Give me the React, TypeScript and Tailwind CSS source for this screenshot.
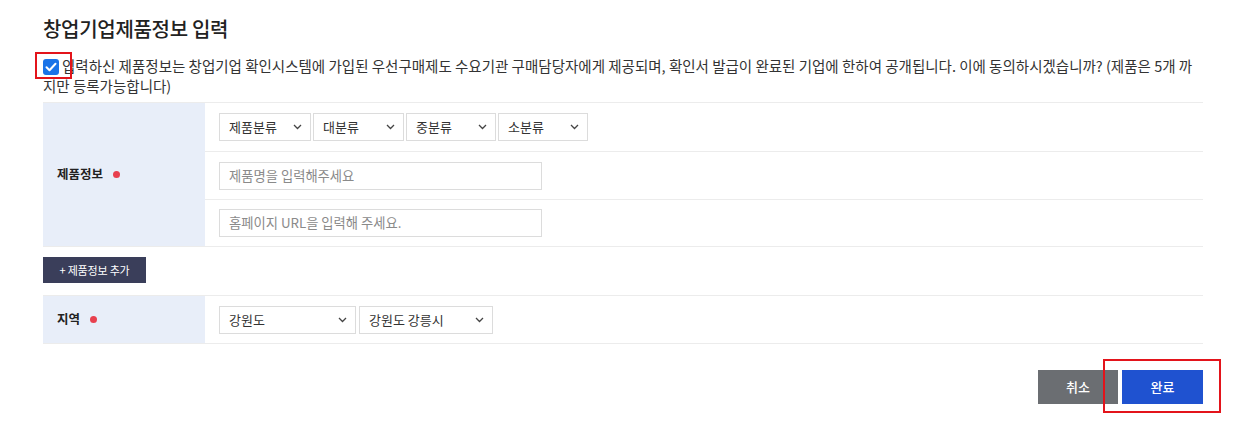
import React from "react";

const font = { fontFamily: '"Noto Sans CJK KR", "Noto Sans", sans-serif' };

function Chevron() {
  return (
    <svg width="9" height="6" viewBox="0 0 9 6" className="absolute right-[8px] top-1/2 -translate-y-1/2">
      <path d="M1 1l3.5 3.5L8 1" fill="none" stroke="#444" strokeWidth="1.3" />
    </svg>
  );
}

function Sel({ label, w }: { label: string; w: string }) {
  return (
    <div className={`relative h-[28px] ${w} border border-[#dcdcdc] bg-white flex items-center pl-[9px] text-[13px] text-[#333]`}>
      {label}
      <Chevron />
    </div>
  );
}

function Dot() {
  return <span className="inline-block w-[7px] h-[7px] rounded-full bg-[#e8404f] ml-[10px]" />;
}

export default function App() {
  return (
    <div className="w-[1248px] h-[429px] bg-white overflow-hidden relative" style={font}>
      <div className="pl-[43px] w-[1203px]">
        <h1 className="pt-[15px] text-[20px] leading-[28px] font-medium text-[#222] tracking-[-0.3px]">창업기업제품정보 입력</h1>
        <div className="mt-[13px] text-[14.5px] leading-[20px] text-[#333] whitespace-nowrap relative">
          <span className="relative inline-block align-[-3px] w-[16px] h-[16px] rounded-[3px] bg-[#1a73e8] mr-[3px]">
            <svg width="16" height="16" viewBox="0 0 16 16" className="absolute inset-0">
              <path d="M3.5 8.2l3 3 6-6.5" fill="none" stroke="white" strokeWidth="2" strokeLinecap="round" strokeLinejoin="round" />
            </svg>
            <span className="absolute left-[-8px] top-[-7px] w-[37px] h-[27px] border-2 border-[#e3141b]" />
          </span>
          입력하신 제품정보는 창업기업 확인시스템에 가입된 우선구매제도 수요기관 구매담당자에게 제공되며, 확인서 발급이 완료된 기업에 한하여 공개됩니다. 이에 동의하시겠습니까? (제품은 5개 까
          <br />
          지만 등록가능합니다)
        </div>

        <div className="mt-[6px] flex border-t border-[#ececec] border-b">
          <div className="w-[162px] bg-[#e8eef9] flex items-center pl-[14px] text-[12.5px] font-bold text-[#222]">
            제품정보<Dot />
          </div>
          <div className="flex-1">
            <div className="h-[49px] border-b border-[#ececec] flex items-center pl-[14px] gap-[2px]">
              <Sel label="제품분류" w="w-[92px]" />
              <Sel label="대분류" w="w-[91px]" />
              <Sel label="중분류" w="w-[90px]" />
              <Sel label="소분류" w="w-[90px]" />
            </div>
            <div className="h-[48px] border-b border-[#ececec] flex items-center pl-[14px]">
              <div className="w-[323px] h-[28px] border border-[#dcdcdc] flex items-center pl-[9px] text-[13.3px] text-[#8a8a8a]">제품명을 입력해주세요</div>
            </div>
            <div className="h-[46px] flex items-center pl-[14px]">
              <div className="w-[323px] h-[28px] border border-[#dcdcdc] flex items-center pl-[9px] text-[13.3px] text-[#8a8a8a]">홈페이지 URL을 입력해 주세요.</div>
            </div>
          </div>
        </div>

        <div className="mt-[10px] w-[103px] h-[26px] bg-[#3a3e5a] text-white text-[11px] flex items-center justify-center tracking-[-0.2px]">+ 제품정보 추가</div>

        <div className="mt-[12px] flex h-[49px] border-t border-b border-[#ececec]">
          <div className="w-[162px] bg-[#e8eef9] flex items-center pl-[14px] text-[12.5px] font-bold text-[#222]">
            지역<Dot />
          </div>
          <div className="flex-1 flex items-center pl-[14px] gap-[3px]">
            <Sel label="강원도" w="w-[137px]" />
            <Sel label="강원도 강릉시" w="w-[134px]" />
          </div>
        </div>

        <div className="mt-[26px] flex justify-end gap-[4px]">
          <div className="w-[80px] h-[34px] bg-[#6b6e72] text-white text-[13px] font-medium flex items-center justify-center">취소</div>
          <div className="relative w-[81px] h-[34px] bg-[#1f52d0] text-white text-[13px] font-medium flex items-center justify-center">
            완료
            <span className="absolute left-[-19px] top-[-11px] w-[118px] h-[54px] border-2 border-[#e3141b]" />
          </div>
        </div>
      </div>
    </div>
  );
}
